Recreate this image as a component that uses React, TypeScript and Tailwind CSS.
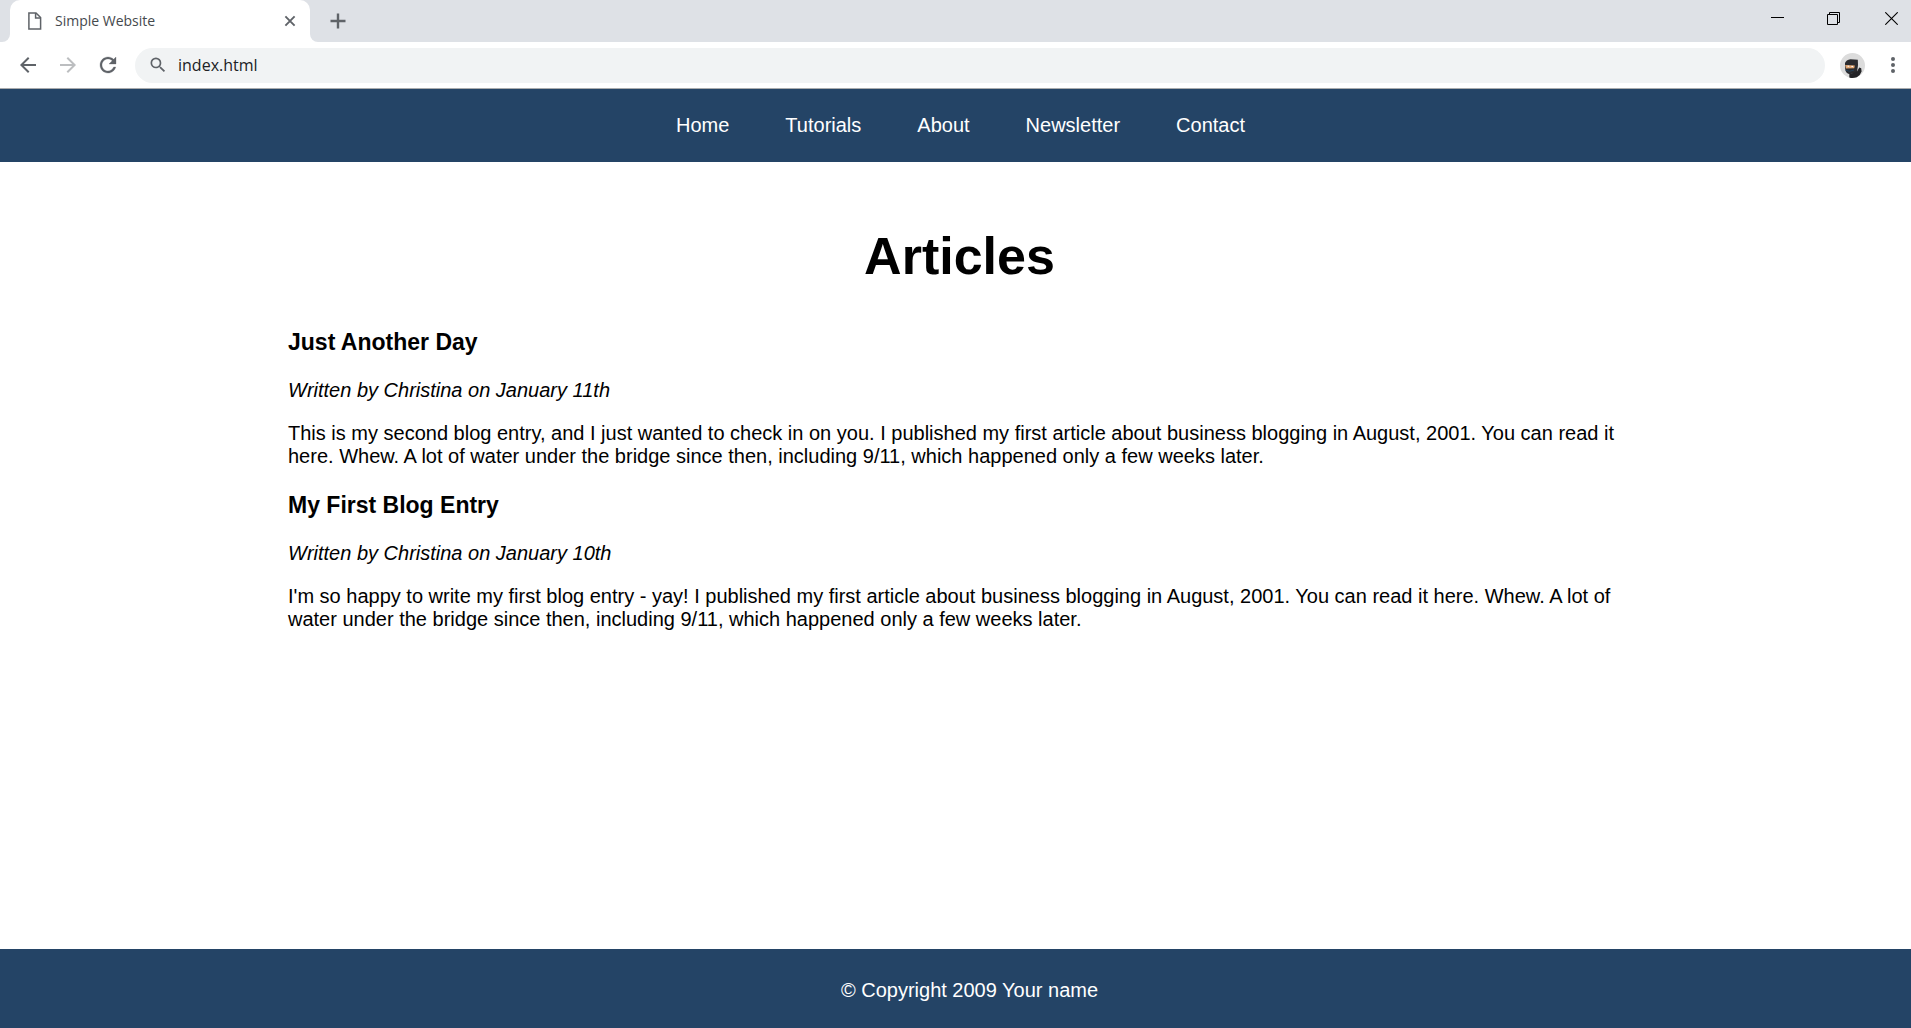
const navLinks = ["Home", "Tutorials", "About", "Newsletter", "Contact"];

const articles = [
  {
    title: "Just Another Day",
    byline: "Written by Christina on January 11th",
    text: "This is my second blog entry, and I just wanted to check in on you. I published my first article about business blogging in August, 2001. You can read it here. Whew. A lot of water under the bridge since then, including 9/11, which happened only a few weeks later.",
  },
  {
    title: "My First Blog Entry",
    byline: "Written by Christina on January 10th",
    text: "I'm so happy to write my first blog entry - yay! I published my first article about business blogging in August, 2001. You can read it here. Whew. A lot of water under the bridge since then, including 9/11, which happened only a few weeks later.",
  },
];

function TabStrip() {
  return (
    <div className="flex h-[42px] items-end bg-[#dee1e6]">
      <div className="h-full w-[10px] bg-white">
        <div className="h-full rounded-br-lg bg-[#dee1e6]" />
      </div>
      <div className="bg-[#dee1e6]">
        <div className="flex h-[42px] w-[300px] items-center rounded-t-[10px] bg-white pl-4 pr-3">
          <svg className="size-[18px]" viewBox="0 0 18 18" fill="none" stroke="#5f6368" strokeWidth="1.5" aria-hidden="true">
            <path d="M2.9 .9H10L14.6 5.5V17.1H2.9Z" />
            <path d="M9.6 .9V5.9H14.6" />
          </svg>
          <span className="ml-[11px] flex-1 text-[14px] leading-5 text-[#45494d]">Simple Website</span>
          <button aria-label="Close tab" className="flex size-4 items-center justify-center">
            <svg className="size-4" viewBox="0 0 16 16" stroke="#5f6368" strokeWidth="1.9" aria-hidden="true">
              <path d="M3.4 3.4 12.6 12.6M12.6 3.4 3.4 12.6" />
            </svg>
          </button>
        </div>
      </div>
      <div className="h-full w-[10px] bg-white">
        <div className="h-full rounded-bl-lg bg-[#dee1e6]" />
      </div>
      <button aria-label="New tab" className="flex h-[42px] w-9 items-center justify-center">
        <svg className="size-4" viewBox="0 0 16 16" stroke="#5f6368" strokeWidth="2.4" aria-hidden="true">
          <path d="M8 .5V15.5M.5 8H15.5" />
        </svg>
      </button>
      <div className="ml-auto flex h-full pr-0.5">
        <button aria-label="Minimize" className="flex h-[37px] w-14 items-center justify-center">
          <svg className="h-[13px] w-[13px]" viewBox="0 0 13 13" stroke="#000" aria-hidden="true">
            <path d="M0 5.5H13" />
          </svg>
        </button>
        <button aria-label="Restore" className="flex h-[37px] w-14 items-center justify-center">
          <svg className="h-[13px] w-[13px]" viewBox="0 0 13 13" fill="none" stroke="#000" aria-hidden="true">
            <path d="M.5 2.5H10.5V12.5H.5ZM2.5 2.5V.5H12.5V10.5H10.5" />
          </svg>
        </button>
        <button aria-label="Close" className="flex h-[37px] w-12 items-center justify-center pl-3">
          <svg className="h-[13px] w-[13px]" viewBox="0 0 13 13" stroke="#000" strokeWidth="1.1" aria-hidden="true">
            <path d="M.3 .3 12.7 12.7M12.7 .3 .3 12.7" />
          </svg>
        </button>
      </div>
    </div>
  );
}

function Avatar() {
  return (
    <svg className="size-[25px]" viewBox="0 0 25 25" aria-hidden="true">
      <circle cx="12.5" cy="12.5" r="12.5" fill="#dcdcdc" />
      <path d="M5 10Q6 7 10.5 6.2L17.8 6.8 18 12 17 19.5 9.5 21.2Q5.6 20.5 5.2 16Z" fill="#2b2b2e" />
      <path d="M5.2 12 14.8 12.4 14.3 15.2 6 15.4Z" fill="#e5a873" />
      <path d="M7.6 13.2H9.2M11.4 13.4H13" stroke="#fff" strokeWidth="1" />
      <path d="M5.6 17.2Q9.5 19.5 14 17" stroke="#24435f" strokeWidth=".9" fill="none" />
      <path d="M9.3 21.2 17 18.5 19.3 14.6 21.2 15.2 21.6 18.5Q20.3 22.6 16.8 24.2 12.5 25.6 9.3 24.4Z" fill="#232326" />
    </svg>
  );
}

function Toolbar() {
  return (
    <div className="flex h-[47px] items-center border-b border-[#a9abad] bg-white pl-4 pr-3">
      <div className="flex items-center gap-4">
        <button aria-label="Back">
          <svg className="size-6" viewBox="0 0 24 24" fill="#5f6368" aria-hidden="true">
            <path d="M20 11H7.83l5.59-5.59L12 4l-8 8 8 8 1.41-1.41L7.83 13H20v-2z" />
          </svg>
        </button>
        <button aria-label="Forward">
          <svg className="size-6" viewBox="0 0 24 24" fill="#bcbec0" aria-hidden="true">
            <path d="M12 4l-1.41 1.41L16.17 11H4v2h12.17l-5.58 5.59L12 20l8-8z" />
          </svg>
        </button>
        <button aria-label="Reload">
          <svg className="size-6" viewBox="0 0 24 24" fill="#5f6368" stroke="#5f6368" strokeWidth=".3" aria-hidden="true">
            <path d="M17.65 6.35C16.2 4.9 14.21 4 12 4c-4.42 0-7.99 3.58-7.99 8s3.57 8 7.99 8c3.73 0 6.84-2.55 7.73-6h-2.08c-.82 2.33-3.04 4-5.65 4-3.31 0-6-2.69-6-6s2.69-6 6-6c1.66 0 3.14.69 4.22 1.78L13 11h7V4l-2.35 2.35z" />
          </svg>
        </button>
      </div>
      <label className="ml-[15px] flex h-[35px] flex-1 items-center rounded-full bg-[#f1f3f4] pl-[13px]">
        <svg className="size-5" viewBox="0 0 24 24" fill="#5f6368" aria-hidden="true">
          <path d="M15.5 14h-.79l-.28-.27A6.471 6.471 0 0 0 16 9.5 6.5 6.5 0 1 0 9.5 16c1.61 0 3.09-.59 4.23-1.57l.27.28v.79l5 4.99L20.49 19l-4.99-5zm-6 0C7.01 14 5 11.99 5 9.5S7.01 5 9.5 5 14 7.01 14 9.5 11.99 14 9.5 14z" />
        </svg>
        <input
          aria-label="Address"
          defaultValue="index.html"
          className="ml-[10px] min-w-0 flex-1 bg-transparent text-[16px] leading-6 text-[#202124] outline-none"
        />
      </label>
      <button aria-label="Profile" className="ml-[15px]">
        <Avatar />
      </button>
      <button aria-label="Menu" className="ml-[22px]">
        <svg className="h-4 w-3" viewBox="0 0 12 16" fill="#5f6368" aria-hidden="true">
          <circle cx="6" cy="2" r="2" />
          <circle cx="6" cy="8" r="2" />
          <circle cx="6" cy="14" r="2" />
        </svg>
      </button>
    </div>
  );
}

export default function App() {
  return (
    <div className="flex min-h-screen flex-col bg-white font-['Liberation_Sans',Arial,sans-serif] text-[20px] leading-[23px] text-black">
      <div className="font-['Open_Sans','Noto_Sans',sans-serif]">
        <TabStrip />
        <Toolbar />
      </div>
      <nav className="bg-[#244466] py-[25px] pl-[10px] text-white">
        <ul className="flex justify-center gap-14">
          {navLinks.map((label) => (
            <li key={label}>
              <a href="#">{label}</a>
            </li>
          ))}
        </ul>
      </nav>
      <main className="flex-1 pl-72 pr-[280px] pt-16">
        <h1 className="text-center text-[52px] leading-[60px] font-bold">Articles</h1>
        <div className="mt-[43px] flex flex-col gap-6">
          {articles.map((article) => (
            <article key={article.title}>
              <h2 className="text-[23px] leading-[27px] font-bold">{article.title}</h2>
              <p className="mt-[23px] italic">{article.byline}</p>
              <p className="mt-5">{article.text}</p>
            </article>
          ))}
        </div>
      </main>
      <footer className="bg-[#244466] pt-[30px] pb-[26px] pl-7 text-center text-white">© Copyright 2009 Your name</footer>
    </div>
  );
}
